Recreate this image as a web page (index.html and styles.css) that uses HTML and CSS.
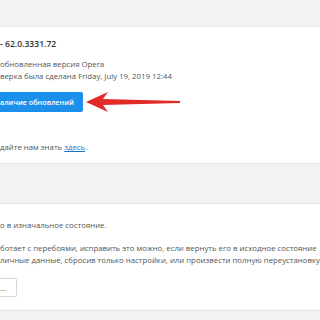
FILE: index.html
```html
<!DOCTYPE html>
<html lang="ru">
<head>
  <meta charset="UTF-8" />
  <meta name="viewport" content="width=device-width, initial-scale=1.0" />
  <title>Обновление и восстановление</title>
<link rel="stylesheet" href="styles.css">
</head>
<body>

<!-- update -->
<section class="card card-update">
  <div class="version">- 62.0.3331.72</div>
  <p class="line first">обновленная версия Opera</p>
  <p class="line">верка была сделана Friday, July 19, 2019 12:44</p>

  <div class="check-row">
    <button class="btn-primary">аличие обновлений</button>
    <svg class="arrow" width="94" height="22" viewBox="0 0 94 22">
      <path d="M0 11 L22 1 L17 8 L94 10 L94 12 L17 14 L22 21 Z" fill="#e02b27"/>
    </svg>
  </div>

  <p class="line feedback">дайте нам знать <a href="#">здесь</a>.</p>
</section>

<!-- reset -->
<section class="card card-reset">
  <p class="line">о в изначальное состояние.</p>
  <p class="line gap">ботает с перебоями, исправить это можно, если вернуть его в исходное состояние</p>
  <p class="line">личные данные, сбросив только настройки, или произвести полную переустановку</p>
  <button class="btn-plain">...</button>
</section>

</body>
</html>
```

FILE: styles.css
```css
/* ─── page base ─────────────────────────────── */
body {
  margin: 0;
  padding-top: 26px;
  background: #f3f3f5;
  font-family: "Open Sans", "Noto Sans", sans-serif;
  color: #555;
  overflow: hidden;
}

p {
  margin: 0;
}

/* ─── cards ─────────────────────────────────── */
.card {
  background: #fff;
  border-top: 1px solid #e6e6e8;
  border-bottom: 1px solid #e6e6e8;
}

.card-update {
  padding: 10px 0 10px;
}

.card-reset {
  margin-top: 39px;
  padding: 15px 0 13px;
}

/* ─── text ──────────────────────────────────── */
.version {
  font-size: 8.6px;
  line-height: 14px;
  font-weight: 600;
  color: #333;
}

.line {
  font-size: 7.8px;
  line-height: 12px;
  white-space: nowrap;
}

.line.first {
  margin-top: 7px;
}

.line.gap {
  margin-top: 11px;
}

.line.feedback {
  margin-top: 29px;
}

.line a {
  color: #1a73c8;
  text-decoration: underline;
}

/* ─── buttons ───────────────────────────────── */
.check-row {
  display: flex;
  align-items: center;
  margin-top: 10px;
}

.btn-primary {
  height: 20px;
  padding: 0 9px 0 0;
  border: none;
  border-radius: 0 2px 2px 0;
  background: #1b8fea;
  color: #fff;
  font-family: inherit;
  font-size: 7.2px;
  font-weight: 600;
}

.arrow {
  margin: -1px 0 -1px 3px;
}

.btn-plain {
  display: block;
  margin-top: 12px;
  height: 19px;
  width: 17px;
  padding: 0;
  border: 1px solid #d8d8d8;
  border-left: none;
  border-radius: 0 2px 2px 0;
  background: #fff;
  color: #555;
  font-family: inherit;
  font-size: 8px;
  text-align: left;
}
```
